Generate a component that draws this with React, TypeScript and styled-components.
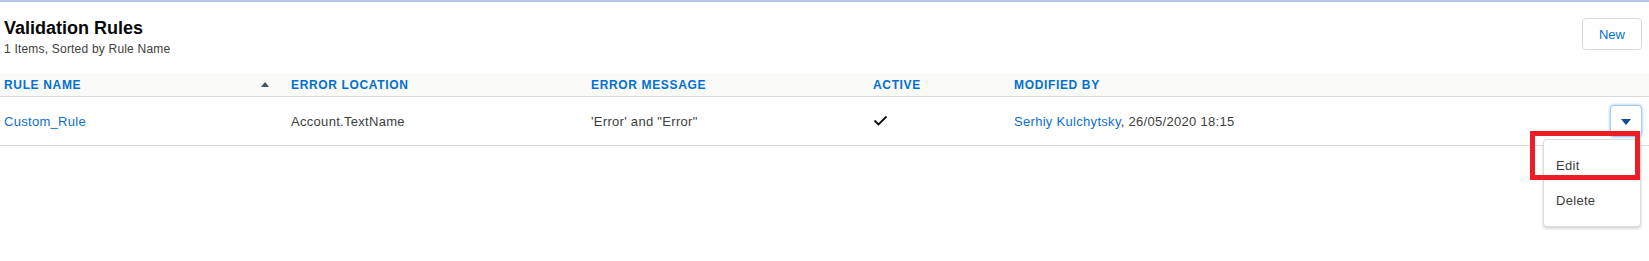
import styled, { createGlobalStyle } from 'styled-components'

const GlobalStyle = createGlobalStyle`
    body {
        margin: 0;
        background: #fff;
        font-family: 'Liberation Sans', Arial, sans-serif;
        color: #3e3e3c;
    }
`

const Page = styled.div`
    border-top: 2px solid #b3c7e0;
    min-height: 259px;
`

const HeaderBar = styled.div`
    display: flex;
    justify-content: space-between;
    align-items: flex-start;
    padding: 16px 7px 15px 4px;
`

const TitleBlock = styled.div`
    display: flex;
    flex-direction: column;
`

const Title = styled.h1`
    margin: 0;
    font-size: 18px;
    line-height: 20px;
    font-weight: 700;
    color: #080707;
`

const Subtitle = styled.div`
    margin-top: 2px;
    font-size: 12px;
    line-height: 18px;
    letter-spacing: 0.2px;
    color: #3e3e3c;
`

const Button = styled.button`
    width: 60px;
    height: 32px;
    border: 1px solid #dddbda;
    border-radius: 4px;
    background: #fff;
    color: #0070d2;
    font-family: inherit;
    font-size: 13px;
    cursor: pointer;
`

const Row = styled.div<{ $head?: boolean }>`
    display: grid;
    grid-template-columns: 287px 300px 282px 141px 1fr 40px;
    align-items: center;
    padding: 0 7px 0 4px;
    height: ${(p) => (p.$head ? '23px' : '48px')};
    background: ${(p) => (p.$head ? '#fafaf9' : '#fff')};
    border-bottom: 1px solid #dddbda;
`

const HeadCell = styled.div`
    display: flex;
    align-items: center;
    justify-content: space-between;
    padding-right: 22px;
    font-size: 12px;
    font-weight: 700;
    letter-spacing: 0.65px;
    text-transform: uppercase;
    color: #0070d2;
`

const SortArrow = styled.span`
    width: 0;
    height: 0;
    border-left: 4px solid transparent;
    border-right: 4px solid transparent;
    border-bottom: 5px solid #3e5168;
`

const Cell = styled.div`
    font-size: 13px;
    letter-spacing: 0.3px;
    color: #3e3e3c;
    white-space: nowrap;
`

const Link = styled.a`
    color: #0b6fce;
    text-decoration: none;
`

const ActionCell = styled.div`
    display: flex;
    justify-content: flex-end;
`

const MenuWrap = styled.div`
    position: relative;
`

const MenuButton = styled.button`
    width: 32px;
    height: 32px;
    padding: 0;
    display: flex;
    align-items: center;
    justify-content: center;
    background: #fff;
    border: 1px solid #a9cbef;
    border-radius: 4px;
    box-shadow: 0 0 3px #7fb4ea;
`

const Caret = styled.span`
    width: 0;
    height: 0;
    margin-top: 1px;
    border-left: 5px solid transparent;
    border-right: 5px solid transparent;
    border-top: 6px solid #0b4f9c;
`

const Menu = styled.div`
    position: absolute;
    top: calc(100% + 2px);
    right: 1px;
    width: 98px;
    padding: 8px 0;
    background: #fff;
    border: 1px solid #dddbda;
    border-radius: 4px;
    box-shadow: 0 2px 3px rgba(0, 0, 0, 0.16);
    box-sizing: border-box;
    z-index: 1;
`

const MenuItem = styled.div`
    height: 35px;
    display: flex;
    align-items: center;
    padding: 0 12px;
    font-size: 13px;
    letter-spacing: 0.3px;
    color: #3e3e3c;
`

const Highlight = styled.div`
    position: absolute;
    left: -80px;
    top: 26px;
    width: 110px;
    height: 49px;
    border: 5px solid #ee1c25;
    box-sizing: border-box;
    z-index: 2;
`

const Check = () => (
    <svg width="15" height="11" viewBox="0 0 15 11">
        <polyline
            points="1.5,5.5 5.5,9.5 13.5,1.5"
            fill="none"
            stroke="#080707"
            strokeWidth="1.8"
        />
    </svg>
)

const App = () => {
    return (
        <Page>
            <GlobalStyle />
            <HeaderBar>
                <TitleBlock>
                    <Title>Validation Rules</Title>
                    <Subtitle>1 Items, Sorted by Rule Name</Subtitle>
                </TitleBlock>
                <Button>New</Button>
            </HeaderBar>
            <Row $head>
                <HeadCell>
                    Rule Name
                    <SortArrow />
                </HeadCell>
                <HeadCell>Error Location</HeadCell>
                <HeadCell>Error Message</HeadCell>
                <HeadCell>Active</HeadCell>
                <HeadCell>Modified By</HeadCell>
                <div />
            </Row>
            <Row>
                <Cell>
                    <Link href="#">Custom_Rule</Link>
                </Cell>
                <Cell>Account.TextName</Cell>
                <Cell>'Error' and "Error"</Cell>
                <Cell>
                    <Check />
                </Cell>
                <Cell>
                    <Link href="#">Serhiy Kulchytsky</Link>, 26/05/2020 18:15
                </Cell>
                <ActionCell>
                    <MenuWrap>
                        <MenuButton>
                            <Caret />
                        </MenuButton>
                        <Menu>
                            <MenuItem>Edit</MenuItem>
                            <MenuItem>Delete</MenuItem>
                        </Menu>
                        <Highlight />
                    </MenuWrap>
                </ActionCell>
            </Row>
        </Page>
    )
}

export default App
